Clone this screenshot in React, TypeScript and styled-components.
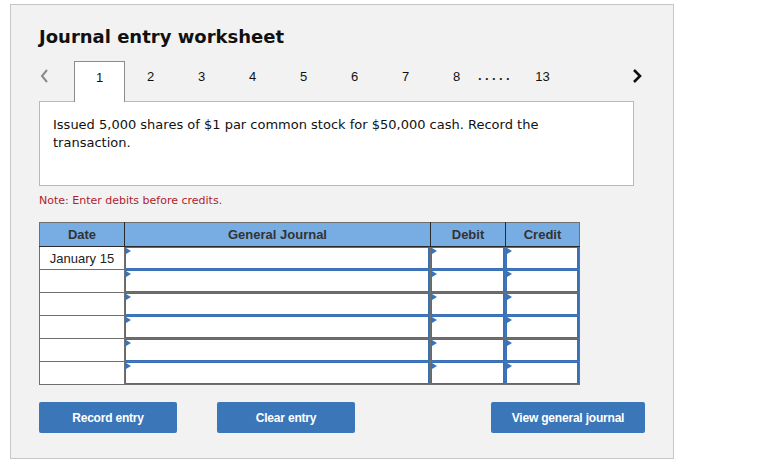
import styled, { createGlobalStyle } from 'styled-components';

const GlobalStyle = createGlobalStyle`
  body {
    margin: 0;
    background: #ffffff;
    font-family: "DejaVu Sans", Verdana, sans-serif;
  }
`;

const Panel = styled.div`
  margin: 4px 0 0 10px;
  width: 662px;
  height: 453px;
  background: #f2f2f2;
  border: 1px solid #c6c6c6;
`;

const Inner = styled.div`
  padding: 21px 0 0 28px;
`;

const Title = styled.h1`
  margin: 0;
  font-family: "DejaVu Sans", Verdana, sans-serif;
  font-weight: bold;
  font-size: 18px;
  line-height: 22px;
  color: #111;
`;

const TabRow = styled.div`
  display: flex;
  align-items: stretch;
  height: 40px;
  margin-top: 13px;
  width: 610px;
  position: relative;
  z-index: 1;
`;

const Arrow = styled.div<{ $end?: boolean }>`
  width: ${({ $end }) => ($end ? '24px' : '35px')};
  margin-left: ${({ $end }) => ($end ? 'auto' : '0')};
  display: flex;
  align-items: center;
  justify-content: ${({ $end }) => ($end ? 'center' : 'flex-start')};
  padding-bottom: 10px;
  box-sizing: border-box;
`;

const Tab = styled.div<{ $active?: boolean }>`
  width: 51px;
  box-sizing: border-box;
  display: flex;
  align-items: center;
  justify-content: center;
  padding-bottom: 10px;
  font-family: "Liberation Sans", Arial, sans-serif;
  font-size: 13px;
  color: #111;
  background: ${({ $active }) => ($active ? '#ffffff' : 'transparent')};
  border: 1px solid ${({ $active }) => ($active ? '#8c8c8c' : 'transparent')};
  border-bottom: none;
  height: ${({ $active }) => ($active ? '41px' : '40px')};
`;

const Dots = styled.div`
  width: 35px;
  margin-left: -4px;
  margin-right: 4px;
  display: flex;
  align-items: center;
  padding-bottom: 12px;
  font-family: "Liberation Sans", Arial, sans-serif;
  font-size: 13px;
  font-weight: bold;
  letter-spacing: 3.4px;
  color: #222;
`;

const Question = styled.div`
  width: 595px;
  height: 85px;
  box-sizing: border-box;
  background: #ffffff;
  border: 1px solid #b9b9b9;
  padding: 14px 13px;
  font-size: 13px;
  line-height: 18px;
  color: #111;
`;

const Note = styled.div`
  margin-top: 8px;
  font-size: 11px;
  line-height: 14px;
  color: #b01c2e;
`;

const Table = styled.table`
  margin-top: 14px;
  border-collapse: collapse;
  table-layout: fixed;
  width: 540px;
  font-family: "Liberation Sans", Arial, sans-serif;
  font-size: 13px;
  color: #222;
`;

const Head = styled.th<{ $w: number }>`
  width: ${({ $w }) => $w}px;
  height: 23px;
  padding: 0;
  background: #78ade3;
  border: 1px solid #2a2a2a;
  border-top-color: #6f6f6f;
  border-left-color: #6f6f6f;
  font-weight: bold;
  color: #333;
  text-align: center;
  vertical-align: middle;
  &:last-child {
    border-right-color: #6f6f6f;
  }
`;

const DateCell = styled.td`
  height: 22px;
  padding: 0;
  background: #ffffff;
  border: 1px solid #6f6f6f;
  text-align: center;
  vertical-align: middle;
`;

const EntryCell = styled.td`
  height: 22px;
  padding: 0;
  border: 1px solid #6f6f6f;
  background: #ffffff;
`;

const EntryBox = styled.div`
  position: relative;
  height: 22px;
  box-sizing: border-box;
  border: 1px solid #3a70b5;
  border-width: 1px 2px 1px 1px;
  background: #ffffff;
  &::before {
    content: '';
    position: absolute;
    top: 0;
    left: 0;
    border-top: 3px solid transparent;
    border-bottom: 3px solid transparent;
    border-left: 5px solid #3a73ba;
  }
`;

const ButtonRow = styled.div`
  display: flex;
  width: 606px;
  margin-top: 17px;
  gap: 40px;
`;

const Button = styled.button<{ $w: number; $push?: boolean }>`
  width: ${({ $w }) => $w}px;
  height: 31px;
  margin-left: ${({ $push }) => ($push ? 'auto' : '0')};
  border: none;
  border-radius: 2px;
  background: #3b76b9;
  color: #ffffff;
  font-family: "Liberation Sans", Arial, sans-serif;
  font-size: 12px;
  font-weight: bold;
  letter-spacing: -0.2px;
  cursor: pointer;
`;

const tabs = ['1', '2', '3', '4', '5', '6', '7', '8'];
const rows = ['January 15', '', '', '', '', ''];

const App = () => {
  return (
    <>
      <GlobalStyle />
      <Panel>
        <Inner>
          <Title>Journal entry worksheet</Title>
          <TabRow>
            <Arrow>
              <svg width="10" height="16" viewBox="0 0 10 16">
                <polyline points="8,2 3,8 8,14" fill="none" stroke="#8a8a8a" strokeWidth="2" />
              </svg>
            </Arrow>
            {tabs.map((t, i) => (
              <Tab key={t} $active={i === 0}>
                {t}
              </Tab>
            ))}
            <Dots>.....</Dots>
            <Tab>13</Tab>
            <Arrow $end>
              <svg width="12" height="16" viewBox="0 0 12 16">
                <polyline points="3,2 9,8 3,14" fill="none" stroke="#111" strokeWidth="2.6" />
              </svg>
            </Arrow>
          </TabRow>
          <Question>
            Issued 5,000 shares of $1 par common stock for $50,000 cash. Record the
            transaction.
          </Question>
          <Note>Note: Enter debits before credits.</Note>
          <Table>
            <thead>
              <tr>
                <Head $w={84}>Date</Head>
                <Head $w={305}>General Journal</Head>
                <Head $w={74}>Debit</Head>
                <Head $w={73}>Credit</Head>
              </tr>
            </thead>
            <tbody>
              {rows.map((d, i) => (
                <tr key={i}>
                  <DateCell>{d}</DateCell>
                  <EntryCell>
                    <EntryBox />
                  </EntryCell>
                  <EntryCell>
                    <EntryBox />
                  </EntryCell>
                  <EntryCell>
                    <EntryBox />
                  </EntryCell>
                </tr>
              ))}
            </tbody>
          </Table>
          <ButtonRow>
            <Button $w={138}>Record entry</Button>
            <Button $w={138}>Clear entry</Button>
            <Button $w={154} $push>
              View general journal
            </Button>
          </ButtonRow>
        </Inner>
      </Panel>
    </>
  );
};

export default App;
